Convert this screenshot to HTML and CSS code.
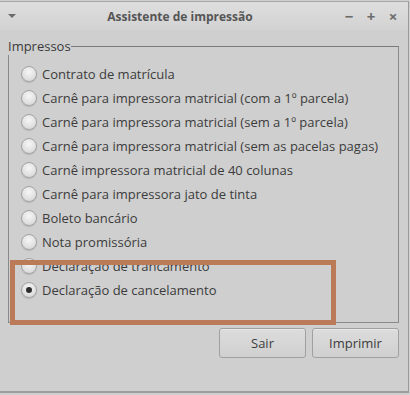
FILE: index.html
```html
<!DOCTYPE html>
<html lang="pt">
<head>
  <meta charset="UTF-8">
  <title>Assistente de impressão</title>
  <link rel="stylesheet" href="styles.css">
</head>
<body>

<div class="window">
  <!-- Title bar -->
  <div class="titlebar">
    <span class="menu-arrow"></span>
    <span class="title">Assistente de impressão</span>
    <span class="wm-btns">
      <span class="wm-btn">&minus;</span>
      <span class="wm-btn">+</span>
      <span class="wm-btn">&times;</span>
    </span>
  </div>

  <div class="body">
    <fieldset class="group">
      <legend>Impressos</legend>
      <label class="opt"><span class="radio"></span>Contrato de matrícula</label>
      <label class="opt"><span class="radio"></span>Carnê para impressora matricial (com a 1º parcela)</label>
      <label class="opt"><span class="radio"></span>Carnê para impressora matricial (sem a 1º parcela)</label>
      <label class="opt"><span class="radio"></span>Carnê para impressora matricial (sem as pacelas pagas)</label>
      <label class="opt"><span class="radio"></span>Carnê impressora matricial de 40 colunas</label>
      <label class="opt"><span class="radio"></span>Carnê para impressora jato de tinta</label>
      <label class="opt"><span class="radio"></span>Boleto bancário</label>
      <label class="opt"><span class="radio"></span>Nota promissória</label>
      <label class="opt"><span class="radio"></span>Declaração de trancamento</label>
      <label class="opt"><span class="radio checked"></span>Declaração de cancelamento</label>
    </fieldset>

    <div class="actions">
      <button class="btn">Sair</button>
      <button class="btn">Imprimir</button>
    </div>
  </div>

  <!-- highlight annotation -->
  <div class="highlight"></div>
</div>

</body>
</html>
```

FILE: styles.css
```css
html, body {
  margin: 0;
  padding: 0;
  background: #cfcfcf;
}
body {
  font-family: "Open Sans", "Noto Sans", sans-serif;
  color: #3a3a3a;
}
.window {
  position: relative;
  width: 409px;
  height: 392px;
  margin-top: 1px;
  border-top: 1px solid #a8a8a8;
  border-right: 1px solid #9a9a9a;
  border-bottom: 2px solid #9c9c9c;
  background: #cfcfcf;
  box-sizing: border-box;
}
.titlebar {
  height: 28px;
  display: flex;
  align-items: center;
  background: linear-gradient(#dedede, #d2d2d2);
  padding: 0 8px;
}
.menu-arrow {
  width: 0;
  height: 0;
  border-left: 4px solid transparent;
  border-right: 4px solid transparent;
  border-top: 4px solid #6a6a6a;
}
.title {
  flex: 1;
  text-align: center;
  font-weight: bold;
  font-size: 12px;
  color: #555;
  margin-left: 2px;
}
.wm-btns {
  display: flex;
  gap: 8px;
  color: #6c6c6c;
  font-size: 15px;
  font-weight: bold;
}
.wm-btn {
  width: 14px;
  text-align: center;
}
.body {
  padding: 7px 9px 0 8px;
}
.group {
  margin: 0;
  padding: 7px 0 6px 12px;
  border: 1px solid #8a8a8a;
  border-top-color: #7a7a7a;
  height: 286px;
  box-sizing: border-box;
}
.group legend {
  padding: 0;
  margin-left: -13px;
  font-size: 13px;
  color: #3a3a3a;
}
.opt {
  display: flex;
  align-items: center;
  height: 24px;
  font-size: 13px;
  color: #3c3c3c;
  white-space: nowrap;
}
.radio {
  width: 14px;
  height: 14px;
  border-radius: 50%;
  border: 1px solid #a3a3a3;
  background: radial-gradient(circle at 50% 35%, #f6f6f6, #dcdcdc 70%);
  box-shadow: 0 1px 1px rgba(0,0,0,0.12);
  margin-right: 5px;
  position: relative;
  flex: none;
}
.radio.checked::after {
  content: "";
  position: absolute;
  left: 4px;
  top: 4px;
  width: 6px;
  height: 6px;
  border-radius: 50%;
  background: #2e2e2e;
}
.actions {
  display: flex;
  justify-content: flex-end;
  gap: 6px;
  margin-top: 5px;
}
.btn {
  width: 87px;
  height: 30px;
  border: 1px solid #a0a0a0;
  border-radius: 3px;
  background: linear-gradient(#dcdcdc, #d0d0d0);
  font-family: "Open Sans", "Noto Sans", sans-serif;
  font-size: 13px;
  color: #3c3c3c;
  box-shadow: inset 0 1px 0 #e8e8e8;
}
.highlight {
  position: absolute;
  left: 10px;
  top: 258px;
  width: 316px;
  height: 55px;
  border: 5px solid #bb7b58;
}
```
